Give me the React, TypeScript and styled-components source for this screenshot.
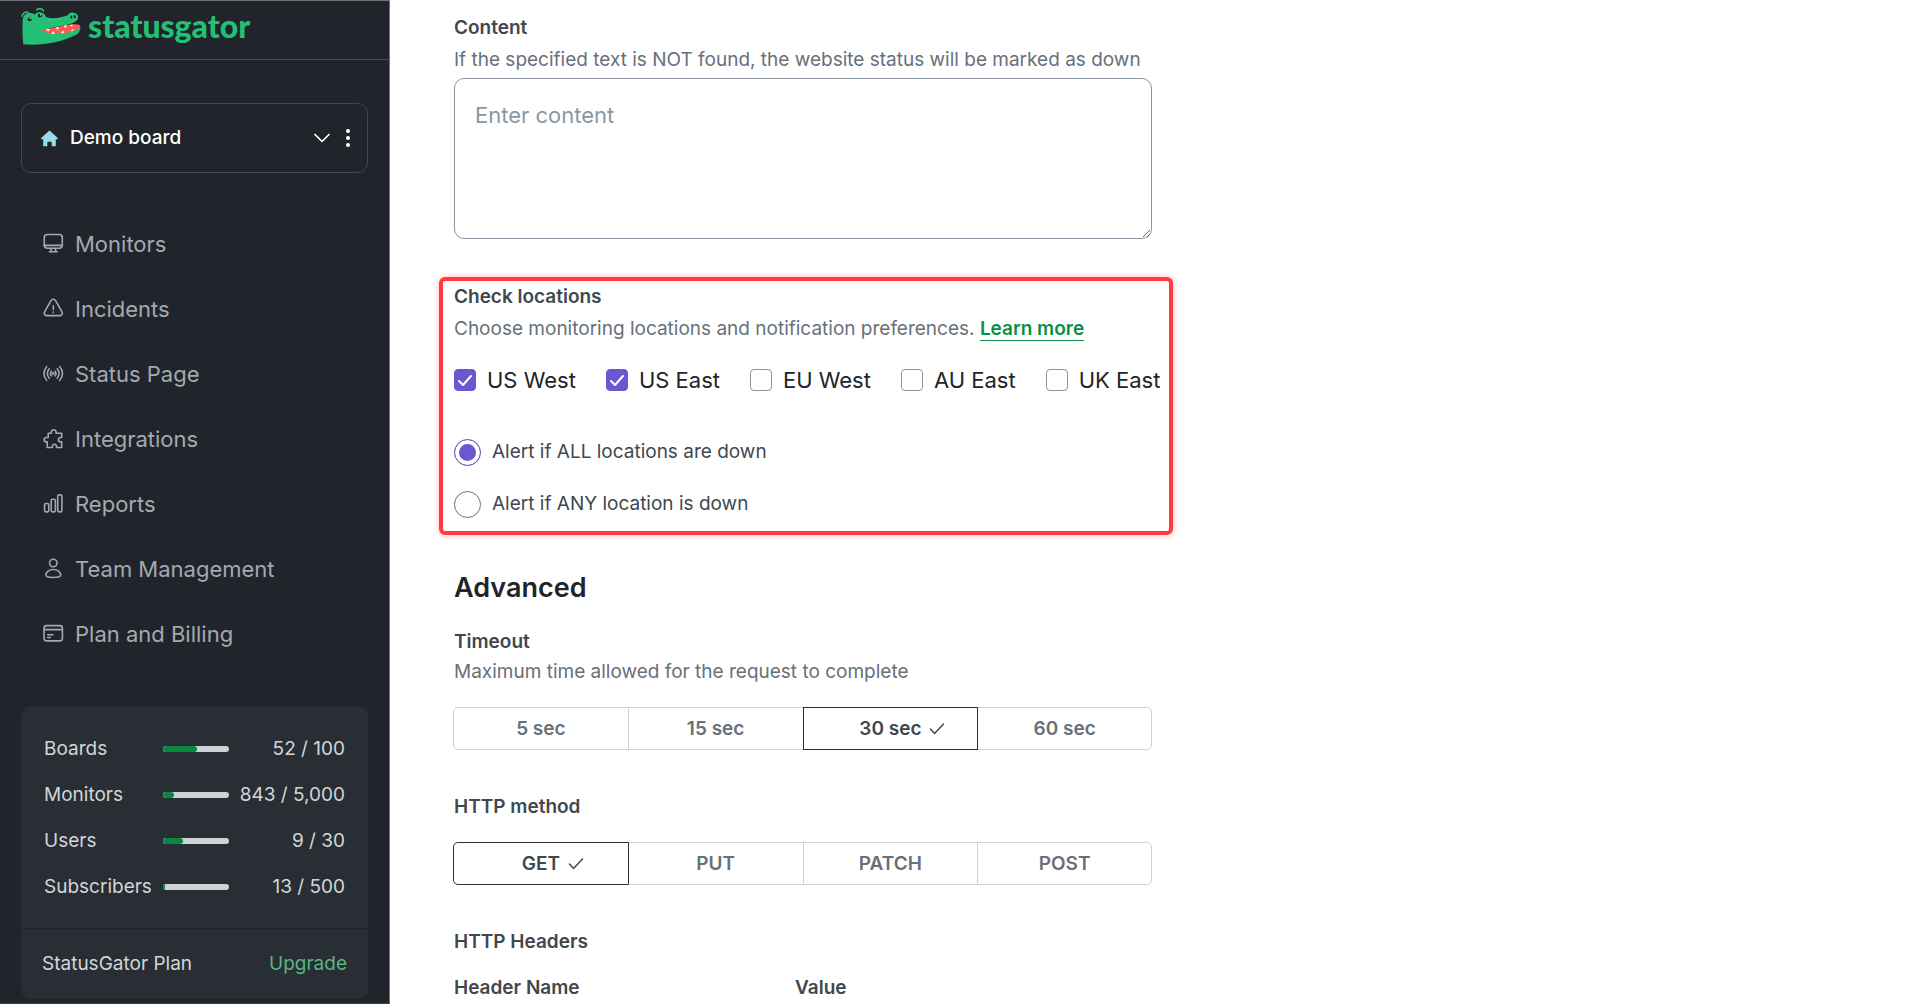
import React, { useState } from "react";
import styled, { createGlobalStyle } from "styled-components";

const GlobalStyle = createGlobalStyle`
  *, *::before, *::after { box-sizing: border-box; }
  body { margin: 0; background: #fff; font-family: Inter, "Liberation Sans", sans-serif; color: #212529; }
  button, textarea, input { font-family: inherit; }
`;

const Page = styled.div`
  display: flex;
  align-items: stretch;
  min-height: 100vh;
`;

const Sidebar = styled.aside`
  flex: none;
  width: 390px;
  background: #21242b;
  border-top: 1px solid #6f7276;
  border-right: 1px solid #6f7276;
  border-bottom: 1px solid #3a3d43;
`;

const Brand = styled.a`
  display: flex;
  align-items: center;
  gap: 6px;
  height: 59px;
  padding: 0 0 8px 21px;
  border-bottom: 1px solid #43474e;
  color: #22c074;
  text-decoration: none;
`;

const BrandName = styled.span`
  font: 900 32px/36px Lato, "Open Sans", sans-serif;
`;

const BoardPicker = styled.div`
  display: flex;
  align-items: center;
  height: 70px;
  margin: 43px 21px 38px 21px;
  padding: 0 7px 0 19px;
  border: 1px solid #43474f;
  border-radius: 10px;
`;

const BoardButton = styled.button`
  flex: 1;
  display: flex;
  align-items: center;
  gap: 12px;
  height: 100%;
  padding: 0;
  border: 0;
  background: none;
  color: #fff;
  font-size: 19px;
  font-weight: 500;
  line-height: 30px;
  text-align: left;
`;

const Grow = styled.span`
  flex: 1;
`;

const MenuButton = styled.button`
  display: flex;
  padding: 0 5px;
  margin-left: 6px;
  border: 0;
  background: none;
  color: #fff;
`;

const Nav = styled.nav`
  display: flex;
  flex-direction: column;
`;

const NavLink = styled.a`
  display: flex;
  align-items: center;
  gap: 11px;
  height: 65px;
  padding-left: 43px;
  color: #a4a9b0;
  font-size: 22px;
  line-height: 30px;
  text-decoration: none;
`;

const UsageCard = styled.section`
  margin: 40px 21px 4px 21px;
  border-radius: 10px;
  background: #292e35;
  color: #d3d5d8;
  font-size: 19px;
  line-height: 46px;
`;

const UsageList = styled.div`
  padding: 20px 23px 18px 23px;
`;

const UsageRow = styled.div`
  display: grid;
  grid-template-columns: 119px 66px 1fr;
  align-items: center;
`;

const UsageValue = styled.span`
  text-align: right;
`;

const Track = styled.div`
  height: 6px;
  border-radius: 3px;
  background: #ced1d5;
  overflow: hidden;
`;

const Fill = styled.div`
  height: 100%;
  border-radius: 3px;
  background: #07873f;
`;

const PlanRow = styled.div`
  display: flex;
  justify-content: space-between;
  padding: 12px 21px;
  border-top: 1px solid #21242b;
`;

const UpgradeLink = styled.a`
  color: #58b584;
  text-decoration: none;
`;

const Main = styled.main`
  flex: 1;
  min-width: 0;
  padding: 13px 0 0 64px;
`;

const Form = styled.form`
  max-width: 698px;
`;

const Heading = styled.div`
  display: flex;
  flex-direction: column;
  gap: 2px;
`;

const labelText = `
  display: block;
  color: #41474e;
  font-size: 19px;
  font-weight: 600;
  line-height: 30px;
`;

const Label = styled.label`${labelText}`;
const Title = styled.div`${labelText}`;

const Hint = styled.div`
  color: #68707a;
  font-size: 19px;
  line-height: 30px;
`;

const TextArea = styled.textarea`
  display: block;
  width: 100%;
  height: 161px;
  margin-top: 3px;
  padding: 20px;
  border: 1px solid #8b95a3;
  border-radius: 10px;
  color: #212529;
  font-size: 22px;
  line-height: 32px;
  resize: vertical;
  &::placeholder { color: #8b95a3; opacity: 1; }
`;

const Highlight = styled.section`
  margin: 38px -21px 0 -15px;
  padding: 1px 11px 11px 11px;
  border: 4px solid #ff3b3d;
  border-radius: 6px;
  box-shadow: 0 0 6px rgba(255, 59, 61, 0.35);
`;

const MoreLink = styled.a`
  border-bottom: 1px solid #0a8f47;
  color: #0a8f47;
  font-weight: 600;
  text-decoration: none;
`;

const CheckRow = styled.div`
  display: flex;
  gap: 30px;
  margin-top: 20px;
`;

const CheckLabel = styled.label`
  display: flex;
  align-items: center;
  gap: 11px;
  color: #212529;
  font-size: 22px;
  line-height: 32px;
  white-space: nowrap;
`;

const checkMark =
  "url(\"data:image/svg+xml,%3Csvg xmlns='http://www.w3.org/2000/svg' viewBox='0 0 22 22'%3E%3Cpath d='M5 12l4 4 8-9' fill='none' stroke='white' stroke-width='2' stroke-linecap='round' stroke-linejoin='round'/%3E%3C/svg%3E\")";

const Checkbox = styled.input.attrs({ type: "checkbox" })`
  appearance: none;
  flex: none;
  width: 22px;
  height: 22px;
  margin: 0;
  border: 1px solid #8b95a3;
  border-radius: 4px;
  background: #fff;
  &:checked {
    border-color: #6a58d0;
    background: #6a58d0 ${checkMark} center / 22px 22px no-repeat;
  }
`;

const RadioGroup = styled.div`
  display: flex;
  flex-direction: column;
  gap: 20px;
  margin-top: 40px;
`;

const RadioLabel = styled.label`
  display: flex;
  align-items: center;
  gap: 11px;
  color: #41474e;
  font-size: 19px;
  line-height: 32px;
`;

const Radio = styled.input.attrs({ type: "radio" })`
  appearance: none;
  flex: none;
  width: 27px;
  height: 27px;
  margin: 0;
  border: 1px solid #6b6f74;
  border-radius: 50%;
  background: #fff;
  &:checked {
    border-color: #6a58d0;
    background: #6a58d0;
    box-shadow: inset 0 0 0 4px #fff;
  }
`;

const SectionTitle = styled.h2`
  margin: 33px 0 19px 0;
  color: #212529;
  font-size: 27px;
  font-weight: 600;
  line-height: 40px;
`;

const Field = styled.div`
  margin-bottom: 42px;
`;

const Segments = styled.div`
  display: grid;
  grid-template-columns: repeat(4, 1fr);
  margin: 20px 0 0 -1px;
`;

const Segment = styled.button<{ $active: boolean }>`
  position: relative;
  z-index: ${(p) => (p.$active ? 1 : 0)};
  display: flex;
  align-items: center;
  justify-content: center;
  gap: 8px;
  height: 43px;
  margin-right: -1px;
  padding: 0 0 0 ${(p) => (p.$active ? 24 : 0)}px;
  border: 1px solid ${(p) => (p.$active ? "#2b3036" : "#ced3d9")};
  background: #fff;
  color: ${(p) => (p.$active ? "#41474e" : "#68707a")};
  font-size: 19px;
  font-weight: 600;
  line-height: 30px;
  &:first-child { border-radius: 5px 0 0 5px; }
  &:last-child { margin-right: 0; border-radius: 0 5px 5px 0; }
`;

const HeaderColumns = styled.div`
  display: grid;
  grid-template-columns: 341px 1fr;
  margin-top: 16px;
`;

const Gator = () => (
  <svg width="61" height="40" viewBox="60 20 184 120" aria-hidden="true">
    <path
      fill="#22c074"
      d="M67 135C64 110 64 84 65 62C66 46 80 36 95 42L103 45C107 36 128 33 136 53C156 60 180 56 202 47C204 37 224 37 231 47C235 58 228 66 218 70C190 80 155 84 132 91C160 106 215 96 239 82C240 95 234 102 222 109C180 130 120 140 67 135Z"
    />
    <path fill="#ff5c4f" d="M121 91C150 90 195 76 216 75C226 75 237 75 239 80C236 91 216 98 190 102C162 106 138 104 121 91Z" />
    <path fill="#fff" d="M135 90L148 89L142 96ZM164 85L175 83L171 91ZM188 80L198 77L195 86ZM208 77L216 76L214 82ZM151 103L158 95L162 104ZM180 102L187 93L190 101ZM209 96L215 88L220 93Z" />
    <path d="M63 50C66 42 72 37 80 38M108 31C115 26 123 28 128 34" fill="none" stroke="#22c074" strokeWidth="5" strokeLinecap="round" />
    <path d="M145 60L147 64M154 60L156 64M165 58L167 62M176 56L178 60" stroke="#7fe0b0" strokeWidth="2" />
    <circle cx="86" cy="60" r="6" fill="#14221c" />
    <circle cx="117" cy="48" r="6" fill="#14221c" />
    <circle cx="88" cy="58" r="2" fill="#fff" />
    <circle cx="119" cy="46" r="2" fill="#fff" />
    <ellipse cx="212" cy="53" rx="3" ry="5" fill="#14221c" />
    <ellipse cx="222" cy="52" rx="3" ry="5" fill="#14221c" />
  </svg>
);

const icons = {
  monitor: (
    <>
      <rect x="1.200" y="1.500" width="17.200" height="13" rx="3" />
      <path d="M1.200 11.800h17.200M8 14.500l-.6 3M11.600 14.500l.6 3M6 17.800h7.600" />
    </>
  ),
  incident: (
    <>
      <path d="M7.600 2.500a2.500 2.500 0 0 1 4.400 0l6.100 10.800a2.300 2.300 0 0 1-2 3.500H3.500a2.300 2.300 0 0 1-2-3.500z" />
      <path d="M9.800 7.500v3.500M9.800 13.300v.4" />
    </>
  ),
  status: (
    <>
      <path d="M3.500 3.500a9.500 9.500 0 0 0 0 13M6 5.500a6.500 6.500 0 0 0 0 9M8 7.800a3.500 3.500 0 0 0 0 4.400M16 3.500a9.500 9.500 0 0 1 0 13M13.500 5.500a6.500 6.500 0 0 1 0 9M11.500 7.800a3.500 3.500 0 0 1 0 4.400" />
      <circle cx="9.750" cy="10" r="0.600" />
    </>
  ),
  puzzle: (
    <path d="M5 5h3V3.800a2.200 2.200 0 1 1 4.400 0V5h5.400v4h-1a2.100 2.100 0 1 0 0 4.200h1V18.500h-5v-1.200a1.900 1.900 0 1 0-3.800 0v1.200H4v-5.300H3.200a2.100 2.100 0 1 1 0-4.200H5z" />
  ),
  reports: (
    <>
      <rect x="1.500" y="10" width="4" height="8" rx="1.300" />
      <rect x="7.800" y="6" width="4" height="12" rx="1.300" />
      <rect x="14" y="1.800" width="4" height="16.200" rx="1.300" />
    </>
  ),
  team: (
    <>
      <circle cx="9.800" cy="4.800" r="3.600" />
      <path d="M9.800 11c-3.800 0-7 2.400-7 5.200 0 1.600 3.200 2.300 7 2.300s7-.7 7-2.300c0-2.800-3.200-5.200-7-5.200z" />
    </>
  ),
  billing: (
    <>
      <rect x="1" y="2.500" width="17.500" height="14.500" rx="2.500" />
      <path d="M1 6.300h17.500M4.500 11.200h5M4.500 13.800h2.500" />
    </>
  ),
};

type IconName = keyof typeof icons;

const NavIcon = ({ name }: { name: IconName }) => (
  <svg width="21" height="21" viewBox="0 0 20 20" fill="none" stroke="currentColor" strokeWidth="1.5" strokeLinecap="round" strokeLinejoin="round" aria-hidden="true">
    {icons[name]}
  </svg>
);

const Tick = () => (
  <svg width="16" height="12" viewBox="0 0 16 12" fill="none" stroke="currentColor" strokeWidth="1.500" strokeLinecap="round" strokeLinejoin="round" aria-hidden="true">
    <path d="M1.500 6l4 4.500 9-9.500" />
  </svg>
);

const navItems: { icon: IconName; text: string }[] = [
  { icon: "monitor", text: "Monitors" },
  { icon: "incident", text: "Incidents" },
  { icon: "status", text: "Status Page" },
  { icon: "puzzle", text: "Integrations" },
  { icon: "reports", text: "Reports" },
  { icon: "team", text: "Team Management" },
  { icon: "billing", text: "Plan and Billing" },
];

const usage = [
  { name: "Boards", used: 52, limit: 100 },
  { name: "Monitors", used: 843, limit: 5000 },
  { name: "Users", used: 9, limit: 30 },
  { name: "Subscribers", used: 13, limit: 500 },
];

const locations = ["US West", "US East", "EU West", "AU East", "UK East"];

function SegmentControl({ label, options, initial }: { label: string; options: string[]; initial: string }) {
  const [value, setValue] = useState(initial);
  return (
    <Segments role="group" aria-label={label}>
      {options.map((o) => (
        <Segment key={o} type="button" $active={o === value} aria-pressed={o === value} onClick={() => setValue(o)}>
          {o}
          {o === value && <Tick />}
        </Segment>
      ))}
    </Segments>
  );
}

export default function App() {
  return (
    <Page>
      <GlobalStyle />
      <Sidebar>
        <Brand href="#home">
          <Gator />
          <BrandName>statusgator</BrandName>
        </Brand>
        <BoardPicker>
          <BoardButton type="button">
            <svg width="17" height="17" viewBox="0 0 17 17" fill="#93deea" aria-hidden="true">
              <path d="M8.500 0.500L16.800 8v1.200H14.800v7H10.800v-3.500a1 1 0 0 0-1-1H7.300a1 1 0 0 0-1 1v3.500H2.200v-7H0.200V8z" />
            </svg>
            Demo board
            <Grow />
            <svg width="16" height="10" viewBox="0 0 16 10" fill="none" stroke="currentColor" strokeWidth="1.700" strokeLinecap="round" strokeLinejoin="round" aria-hidden="true">
              <path d="M1 1.500l7 7 7-7" />
            </svg>
          </BoardButton>
          <MenuButton type="button" aria-label="Board options">
            <svg width="14" height="20" viewBox="0 0 14 20" fill="currentColor" aria-hidden="true">
              <circle cx="7" cy="3" r="2" />
              <circle cx="7" cy="10" r="2" />
              <circle cx="7" cy="17" r="2" />
            </svg>
          </MenuButton>
        </BoardPicker>
        <Nav>
          {navItems.map((n) => (
            <NavLink key={n.text} href="#">
              <NavIcon name={n.icon} />
              {n.text}
            </NavLink>
          ))}
        </Nav>
        <UsageCard>
          <UsageList>
            {usage.map((u) => (
              <UsageRow key={u.name}>
                <span>{u.name}</span>
                <Track>
                  <Fill style={{ width: `${(u.used / u.limit) * 100}%` }} />
                </Track>
                <UsageValue>
                  {u.used} / {u.limit.toLocaleString("en-US")}
                </UsageValue>
              </UsageRow>
            ))}
          </UsageList>
          <PlanRow>
            <span>StatusGator Plan</span>
            <UpgradeLink href="#upgrade">Upgrade</UpgradeLink>
          </PlanRow>
        </UsageCard>
      </Sidebar>
      <Main>
        <Form>
          <Heading>
            <Label htmlFor="content">Content</Label>
            <Hint>If the specified text is NOT found, the website status will be marked as down</Hint>
          </Heading>
          <TextArea id="content" placeholder="Enter content" />
          <Highlight>
            <Heading>
              <Title>Check locations</Title>
              <Hint>
                Choose monitoring locations and notification preferences. <MoreLink href="#learn">Learn more</MoreLink>
              </Hint>
            </Heading>
            <CheckRow>
              {locations.map((l, i) => (
                <CheckLabel key={l}>
                  <Checkbox defaultChecked={i < 2} />
                  {l}
                </CheckLabel>
              ))}
            </CheckRow>
            <RadioGroup>
              <RadioLabel>
                <Radio name="alert" defaultChecked />
                Alert if ALL locations are down
              </RadioLabel>
              <RadioLabel>
                <Radio name="alert" />
                Alert if ANY location is down
              </RadioLabel>
            </RadioGroup>
          </Highlight>
          <SectionTitle>Advanced</SectionTitle>
          <Field>
            <Title>Timeout</Title>
            <Hint>Maximum time allowed for the request to complete</Hint>
            <SegmentControl label="Timeout" options={["5 sec", "15 sec", "30 sec", "60 sec"]} initial="30 sec" />
          </Field>
          <Field>
            <Title>HTTP method</Title>
            <SegmentControl label="HTTP method" options={["GET", "PUT", "PATCH", "POST"]} initial="GET" />
          </Field>
          <Title>HTTP Headers</Title>
          <HeaderColumns>
            <Title>Header Name</Title>
            <Title>Value</Title>
          </HeaderColumns>
        </Form>
      </Main>
    </Page>
  );
}
